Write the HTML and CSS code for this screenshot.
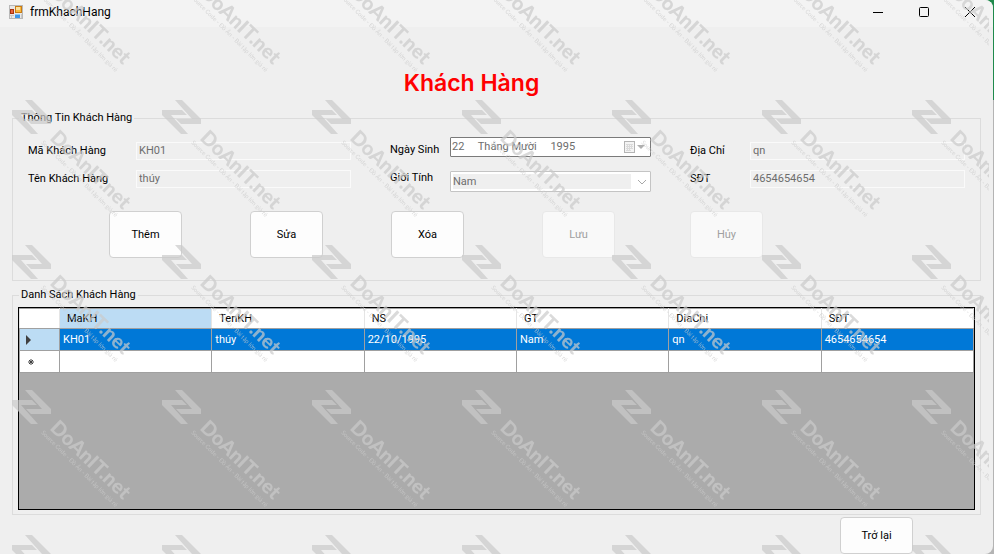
FILE: index.html
```
<!DOCTYPE html>
<html lang="vi">
<head>
    <meta charset="UTF-8">
    <meta name="viewport" content="width=device-width, initial-scale=1.0">
    <title>frmKhachHang</title>
    <link rel="stylesheet" href="styles.css">
</head>
<body>

<div class="window">
    <header class="titlebar">
        <svg class="app-icon" width="14" height="14" viewBox="0 0 14 14">
            <rect x="0.5" y="0.5" width="13" height="13" fill="#e8e8e8" stroke="#b8b8b8"/>
            <path d="M1 10.5h4M2.5 11v2M12.5 9v4" stroke="#c8c8c8"/>
            <rect x="1.5" y="4.5" width="3" height="4" fill="#e8643c" stroke="#a83410"/>
            <rect x="6.5" y="1.5" width="6" height="6" fill="#f8b83c" stroke="#c97c14"/>
            <path d="M7 2h4v3H7z" fill="#fde09a"/>
            <rect x="6" y="9" width="5" height="4" fill="#3d97ea"/>
            <path d="M6 9h5v1H6z" fill="#8cc6f8"/>
        </svg>
        <span class="window-title">frmKhachHang</span>
        <div class="window-controls">
            <button type="button" aria-label="Minimize">
                <svg width="10" height="10" viewBox="0 0 10 10"><path d="M0 5.5h10" stroke="#000"/></svg>
            </button>
            <button type="button" aria-label="Maximize">
                <svg width="10" height="10" viewBox="0 0 10 10"><rect x="0.5" y="0.5" width="9" height="9" rx="1" fill="none" stroke="#000"/></svg>
            </button>
            <button type="button" aria-label="Close">
                <svg width="10" height="10" viewBox="0 0 10 10"><path d="M0 0l10 10M10 0L0 10" stroke="#000"/></svg>
            </button>
        </div>
    </header>

    <main>
        <h1>Khách Hàng</h1>

        <fieldset>
            <legend>Thông Tin Khách Hàng</legend>
            <div class="fields">
                <div class="field-column">
                    <div class="field field-wide">
                        <label for="maKH">Mã Khách Hàng</label>
                        <input type="text" id="maKH" value="KH01" disabled>
                    </div>
                    <div class="field field-wide">
                        <label for="tenKH">Tên Khách Hàng</label>
                        <input type="text" id="tenKH" value="thúy" disabled>
                    </div>
                </div>
                <div class="field-column field-column-pickers">
                    <div class="field field-date">
                        <label for="ngaySinh">Ngày Sinh</label>
                        <div class="date-box">
                            <input type="text" id="ngaySinh" value="22     Tháng Mười     1995" disabled>
                            <svg width="22" height="12" viewBox="0 0 22 12">
                                <rect x="0.5" y="0.5" width="10" height="11" fill="#f4f4f4" stroke="#b4b4b4"/>
                                <path d="M2 3.5h7M2 5.5h7M2 7.5h7M2 9.5h5M3.5 3v7M5.5 3v7M7.5 3v5" stroke="#dadada"/>
                                <path d="M13 4h8l-4 4z" fill="#b0b0b0"/>
                            </svg>
                        </div>
                    </div>
                    <div class="field field-combo">
                        <label for="gioiTinh">Giới Tính</label>
                        <div class="combo-box">
                            <select id="gioiTinh" disabled>
                                <option>Nam</option>
                                <option>Nữ</option>
                            </select>
                            <svg width="10" height="6" viewBox="0 0 10 6"><path d="M1 1l4 4 4-4" fill="none" stroke="#a8a8a8"/></svg>
                        </div>
                    </div>
                </div>
                <div class="field-column">
                    <div class="field">
                        <label for="diaChi">Địa Chỉ</label>
                        <input type="text" id="diaChi" value="qn" disabled>
                    </div>
                    <div class="field">
                        <label for="sdt">SĐT</label>
                        <input type="text" id="sdt" value="4654654654" disabled>
                    </div>
                </div>
            </div>
            <div class="actions">
                <div class="edit-actions">
                    <button type="button" class="btn">Thêm</button>
                    <button type="button" class="btn">Sửa</button>
                    <button type="button" class="btn">Xóa</button>
                </div>
                <div class="save-actions">
                    <button type="button" class="btn" disabled>Lưu</button>
                    <button type="button" class="btn" disabled>Hủy</button>
                </div>
            </div>
        </fieldset>

        <fieldset class="list-group">
            <legend>Danh Sách Khách Hàng</legend>
            <div class="grid-view">
                <table>
                    <thead>
                        <tr>
                            <th class="row-header"></th>
                            <th class="current">MaKH</th>
                            <th>TenKH</th>
                            <th>NS</th>
                            <th>GT</th>
                            <th>DiaChi</th>
                            <th>SĐT</th>
                        </tr>
                    </thead>
                    <tbody>
                        <tr class="selected">
                            <td class="row-header"><svg width="6" height="10" viewBox="0 0 6 10"><path d="M0 0l5 5-5 5z" fill="#404040"/></svg></td>
                            <td>KH01</td>
                            <td>thúy</td>
                            <td>22/10/1995</td>
                            <td>Nam</td>
                            <td>qn</td>
                            <td>4654654654</td>
                        </tr>
                        <tr>
                            <td class="row-header row-new"><svg width="6" height="6" viewBox="0 0 6 6"><path d="M3 0v6M0 3h6M1 1l4 4M5 1L1 5" stroke="#404040"/></svg></td>
                            <td></td>
                            <td></td>
                            <td></td>
                            <td></td>
                            <td></td>
                            <td></td>
                        </tr>
                    </tbody>
                </table>
            </div>
        </fieldset>

        <div class="footer">
            <button type="button" class="btn btn-back">Trở lại</button>
        </div>
    </main>

    <svg class="watermark" aria-hidden="true">
        <defs>
            <pattern id="mark" x="12" y="100" width="150" height="145" patternUnits="userSpaceOnUse">
                <path d="M13 0h7l19 19v5H19l-5-5h16z"/>
                <path d="M26 34h-7L0 15v-5h20l5 5H9z"/>
                <text class="mark-name" transform="translate(37 39) rotate(44)">DoAnIT.net</text>
                <text class="mark-note" transform="translate(29 43) rotate(45)">Source Code - Đồ Án - Bài tập lớn giá rẻ</text>
            </pattern>
        </defs>
        <rect width="100%" height="100%" fill="url(#mark)"/>
    </svg>
</div>

</body>
</html>
```
FILE: styles.css
```
* {
    box-sizing: border-box;
}

body {
    margin: 0;
    font-family: Roboto, "Liberation Sans", sans-serif;
    font-size: 11px;
    line-height: 14px;
    color: #000;
    background: linear-gradient(#1f8a4c 100px, #b4b4b4 100px);
}

.window {
    position: relative;
    margin-right: 1px;
    min-height: 100vh;
    background-color: #efefef;
    border-radius: 0 8px 8px 0;
    overflow: hidden;
}

.titlebar {
    display: flex;
    align-items: center;
    height: 27px;
    padding: 0 0 4px 9px;
    background-color: #f3f3f3;
}

.window-title {
    margin-left: 7px;
    font-size: 12px;
}

.window-controls {
    display: flex;
    margin-left: auto;
}

.window-controls button {
    display: flex;
    align-items: center;
    justify-content: center;
    width: 46px;
    height: 23px;
    padding: 0;
    border: none;
    background: none;
}

main {
    padding: 41px 12px 0;
}

h1 {
    margin: 0 0 13px;
    padding-right: 50px;
    font-family: Inter, sans-serif;
    font-size: 23px;
    font-weight: 600;
    line-height: 30px;
    text-align: center;
    color: #ff0000;
}

fieldset {
    min-width: 0;
    margin: 0;
    padding: 0;
    border: 1px solid #dcdcdc;
}

legend {
    margin-left: 6px;
    padding: 0 2px;
}

.fields {
    display: grid;
    grid-template-columns: 323fr 261fr 275fr;
    align-items: center;
    column-gap: 39px;
    padding: 12px 15px 0;
}

.field-column {
    display: grid;
    row-gap: 10px;
}

.field-column-pickers {
    row-gap: 14px;
}

.field {
    display: grid;
    grid-template-columns: 60px 1fr;
    align-items: center;
}

.field-wide {
    grid-template-columns: 108px 1fr;
}

.field-date {
    align-items: end;
}

.field-combo {
    align-items: start;
}

input,
select {
    width: 100%;
    min-width: 0;
    margin: 0;
    padding: 0 2px;
    border: none;
    font: inherit;
    color: #6d6d6d;
    background-color: #efefef;
    opacity: 1;
}

.field > input {
    height: 18px;
    border: 1px solid #fafafa;
}

.date-box,
.combo-box {
    display: flex;
    align-items: center;
    border: 1px solid #c4c4c4;
    border-radius: 1px;
    background-color: #fff;
}

.date-box {
    height: 20px;
    padding-right: 4px;
    border-color: #7a7a7a;
}

.date-box input {
    padding: 0 1px;
    background-color: #fff;
}

.date-box svg,
.combo-box svg {
    flex: none;
}

.combo-box {
    height: 21px;
    padding: 2px 3px 2px 2px;
}

.combo-box select {
    height: 15px;
    margin-right: 6px;
    padding: 0;
    appearance: none;
}

.actions,
.edit-actions,
.save-actions {
    display: flex;
}

.actions {
    gap: 78px;
    padding: 19px 96px 22px;
}

.edit-actions {
    gap: 68px;
}

.save-actions {
    gap: 75px;
}

.btn {
    width: 73px;
    height: 47px;
    padding: 0;
    border: 1px solid #d0d0d0;
    border-radius: 4px;
    font: inherit;
    color: #000;
    background-color: #fdfdfd;
}

.btn:disabled {
    border-color: #e8e8e8;
    color: #a0a0a0;
    background-color: #f9f9f9;
}

.list-group {
    margin-top: 7px;
    padding: 0 5px 4px;
}

.list-group legend {
    margin-left: 1px;
}

.grid-view {
    min-height: 203px;
    margin-top: 5px;
    border: 1px solid #000;
    background-color: #ababab;
}

table {
    width: 100%;
    table-layout: fixed;
    border-collapse: collapse;
}

th,
td {
    height: 22px;
    padding: 0 3px;
    border: 1px solid #a0a0a0;
    font-weight: normal;
    text-align: left;
    background-color: #fff;
}

th {
    height: 20px;
    padding: 0 7px;
    border-left-color: #e5e5e5;
    border-right-color: #e5e5e5;
}

.row-header {
    width: 40px;
    padding: 0 6px;
}

.row-header svg {
    display: block;
}

.row-new {
    padding: 0 8px;
}

.current {
    background-color: #bcdcf4;
}

.selected td {
    color: #fff;
    background-color: #0078d7;
}

.selected .row-header {
    background-color: #bcdcf4;
}

.footer {
    display: flex;
    justify-content: flex-end;
    padding: 2px 68px 0 0;
}

.btn-back {
    height: 37px;
}

/* diagonal marks lie over the whole window */
.watermark {
    position: absolute;
    top: 0;
    left: 0;
    width: calc(100% - 4px);
    height: 100%;
    fill: #cbcbcb;
    opacity: 0.7;
    pointer-events: none;
}

.mark-name {
    font-family: Lato, sans-serif;
    font-size: 20px;
    font-weight: 900;
}

.mark-note {
    font-family: Lato, sans-serif;
    font-size: 6px;
}
```
